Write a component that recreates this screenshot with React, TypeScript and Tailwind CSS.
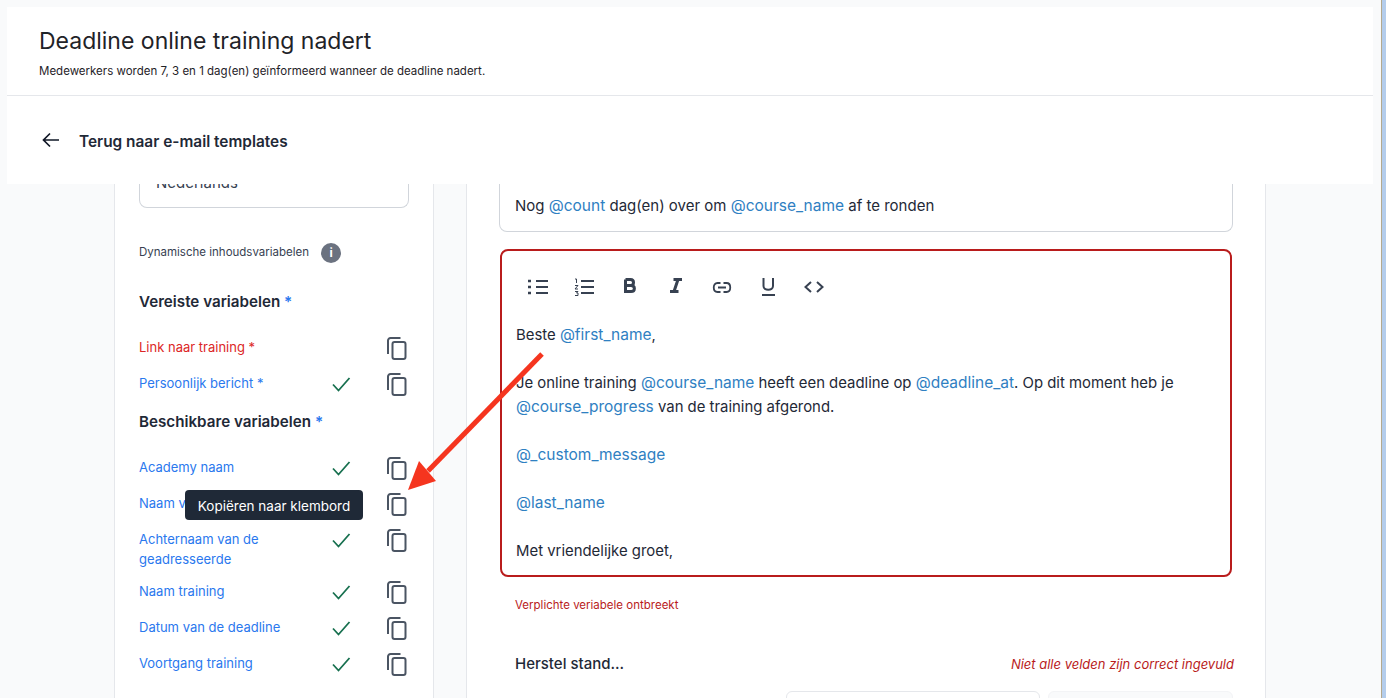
import { ReactNode } from "react";

function CopyIcon() {
  return (
    <svg width="24" height="24" viewBox="0 0 24 24" fill="none" stroke="#4b5563" strokeWidth="2" className="shrink-0">
      <path d="M15.5 2H5.5C4.2 2 3 3.2 3 4.5V18" />
      <rect x="7.5" y="6" width="13" height="17" rx="2" />
    </svg>
  );
}

function CheckIcon() {
  return (
    <svg width="20" height="20" viewBox="0 0 20 20" fill="none" stroke="#17704f" strokeWidth="1.8" className="shrink-0">
      <path d="M2 10.5L7.5 16.5L18.5 4" />
    </svg>
  );
}

function VarRow({ label, required, checked, tall, children }: { label: string; required?: boolean; checked?: boolean; tall?: boolean; children?: ReactNode }) {
  return (
    <div className={`flex items-start ${tall ? "h-[52px]" : "h-9"}`}>
      <div className={`w-[192px] text-[13px] leading-5 mt-[1px] ${required ? "text-[#dc2626]" : "text-[#2a78ee]"}`}>
        {children ?? label}
      </div>
      <div className="w-[28px] mt-[2px]">{checked && <CheckIcon />}</div>
      <div className="ml-[26px]">
        <CopyIcon />
      </div>
    </div>
  );
}

function Mention({ children }: { children: ReactNode }) {
  return <span className="text-[15.5px] text-[#2f80c2]">{children}</span>;
}

function App() {
  return (
    <div className="relative h-[698px] w-[1386px] overflow-hidden bg-[#f9fafb] font-['Inter',sans-serif] text-[#111827]">
      {/* browser edge */}
      <div className="absolute right-0 top-0 h-full w-[5px] bg-[#b4cdec] border-l border-[#b3a98f]" />

      <header className="relative z-10 ml-[7px] mt-[7px] w-[1366px] bg-white h-[177px]">
        <div className="h-[89px] border-b border-[#e5e7eb] pl-8 pt-[20px]">
          <h1 className="text-[23px] leading-7 font-normal text-[#1f2328]">Deadline online training nadert</h1>
          <p className="mt-[8px] text-[11.5px] leading-4 text-[#1f2328]">
            Medewerkers worden 7, 3 en 1 dag(en) geïnformeerd wanneer de deadline nadert.
          </p>
        </div>
        <div className="flex h-[88px] items-center pl-[35px]">
          <svg width="18" height="16" viewBox="0 0 18 16" fill="none" stroke="#111827" strokeWidth="1.7">
            <path d="M17 8H1.5M8 1.5L1.5 8L8 14.5" />
          </svg>
          <span className="ml-[19px] mt-[4px] text-[15.4px] font-semibold text-[#1f2937]">Terug naar e-mail templates</span>
        </div>
      </header>

      <main className="flex pl-[114px]">
        {/* left column */}
        <aside className="h-[514px] w-[320px] border-x border-[#e5e7eb] bg-white pl-6">
          <div className="flex h-6 w-[270px] items-start rounded-b-lg border border-t-0 border-[#d1d5db] pl-4">
            <span className="-mt-[11px] text-[15px] leading-5 text-[#374151]">Nederlands</span>
          </div>
          <div className="mt-[35px] flex h-5 items-center">
            <span className="text-[11.5px] text-[#374151]">Dynamische inhoudsvariabelen</span>
            <span className="ml-3 flex h-5 w-5 items-center justify-center rounded-full bg-[#6b7280] text-xs font-bold text-white">i</span>
          </div>
          <h3 className="mt-[29px] text-[15.2px] font-semibold leading-5 text-[#1f2937]">
            Vereiste variabelen <span className="text-[#2a78ee]">*</span>
          </h3>
          <div className="mt-[24px]">
            <VarRow label="Link naar training *" required />
            <VarRow label="Persoonlijk bericht *" checked />
          </div>
          <h3 className="mt-[4px] text-[15.2px] font-semibold leading-5 text-[#1f2937]">
            Beschikbare variabelen <span className="text-[#2a78ee]">*</span>
          </h3>
          <div className="mt-[24px]">
            <VarRow label="Academy naam" checked />
            <VarRow label="Naam van de geadresseerde" checked>
              <div className="h-5">Naam v</div>
            </VarRow>
            <VarRow label="Achternaam van de geadresseerde" checked tall />
            <VarRow label="Naam training" checked />
            <VarRow label="Datum van de deadline" checked />
            <VarRow label="Voortgang training" checked />
          </div>
        </aside>

        {/* right column */}
        <section className="ml-[32px] h-[514px] w-[800px] border-x border-[#e5e7eb] bg-white pl-8">
          <div className="flex h-12 w-[734px] items-start rounded-b-lg border border-t-0 border-[#d1d5db] pl-[15px] pt-[10px] text-[15px] leading-6 text-[#1f2937]">
            <span>
              Nog <Mention>@count</Mention> dag(en) over om <Mention>@course_name</Mention> af te ronden
            </span>
          </div>
          <div className="ml-[1px] mt-[17px] h-[328px] w-[732px] rounded-lg border-2 border-[#b91c1c] pl-[14px] pt-[24px] text-[14.9px] leading-6 text-[#374151]">
            <div className="flex h-6 items-center gap-[26px] pl-[12px]">
              <svg width="20" height="20" viewBox="0 0 20 20" fill="none" stroke="#374151" strokeWidth="2">
                <path d="M8 4H20M8 10H20M8 16H20" />
                <path d="M0 4H3M0 10H3M0 16H3" strokeWidth="2.4" />
              </svg>
              <svg width="20" height="20" viewBox="0 0 20 20" fill="none" stroke="#374151" strokeWidth="2">
                <path d="M7 4H20M7 10H20M7 16H20" />
                <path d="M1 2H2.5V6M1 8.5H4L1 12H4M1 14.5H4L2.5 16H4V18.5H1" strokeWidth="1" />
              </svg>
              <svg width="20" height="20" viewBox="0 0 20 20" fill="none" stroke="#374151" strokeWidth="3">
                <path d="M5.5 2.5H10.5C14.5 2.5 14.5 8.5 10.5 8.5H5.5M5.5 8.5H11C15.5 8.5 15.5 14.5 11 14.5H5.5ZM5.5 2.5V14.5" />
              </svg>
              <svg width="20" height="20" viewBox="0 0 20 20" fill="none" stroke="#374151" strokeWidth="3">
                <path d="M7.5 2.5H16M4 14.5H12.5M12 2.5L8 14.5" />
              </svg>
              <svg width="20" height="20" viewBox="0 0 20 20" fill="none" stroke="#374151" strokeWidth="1.8">
                <path d="M8.5 6H5.5C0.5 6 0.5 15 5.5 15H8.5M11.5 6H14.5C19.5 6 19.5 15 14.5 15H11.5M6 10.5H14" />
              </svg>
              <svg width="20" height="20" viewBox="0 0 20 20" fill="none" stroke="#374151" strokeWidth="2">
                <path d="M5.5 1V9C5.5 14 15 14 15 9V1M4 18H17" />
              </svg>
              <svg width="20" height="20" viewBox="0 0 20 20" fill="none" stroke="#374151" strokeWidth="2">
                <path d="M7 5L1.5 10L7 15M13 5L18.5 10L13 15" />
              </svg>
            </div>
            <div className="mt-[24px] text-[#1f2937]">
              <p>Beste <Mention>@first_name</Mention>,</p>
              <p className="mt-6">
                Je online training <Mention>@course_name</Mention> heeft een deadline op <Mention>@deadline_at</Mention>. Op dit moment heb je
                <br />
                <Mention>@course_progress</Mention> van de training afgerond.
              </p>
              <p className="mt-6"><Mention>@_custom_message</Mention></p>
              <p className="mt-6"><Mention>@last_name</Mention></p>
              <p className="mt-6">Met vriendelijke groet,</p>
            </div>
          </div>
          <p className="mt-[20px] pl-[16px] text-[11.5px] leading-4 text-[#b91c1c]">Verplichte veriabele ontbreekt</p>
          <div className="mt-[41px] flex w-[735px] items-center justify-between pl-[16px]">
            <span className="text-[15px] font-medium leading-5 text-[#1f2937]">Herstel stand...</span>
            <span className="text-[13px] italic leading-5 text-[#b91c1c]">Niet alle velden zijn correct ingevuld</span>
          </div>
          <div className="mt-[17px] flex w-[734px] justify-end gap-[8px]">
            <div className="h-10 w-[254px] rounded-md border border-[#e5e7eb] bg-white" />
            <div className="h-10 w-[185px] rounded-md border border-[#f3f4f6] bg-[#f9fafb]" />
          </div>
        </section>
      </main>

      {/* tooltip */}
      <div className="absolute left-[185px] top-[490px] z-20 flex h-[30px] w-[178px] items-center justify-center rounded bg-[#1f2937] pt-[2px] text-[13.5px] text-white">
        Kopiëren naar klembord
      </div>

      {/* annotation arrow */}
      <svg className="absolute left-[400px] top-[345px] z-20" width="150" height="150" viewBox="0 0 150 150">
        <path d="M142 9L28 126" stroke="#f5351f" strokeWidth="5" />
        <path d="M8 145L19 116L36 136Z" fill="#f5351f" />
      </svg>
    </div>
  );
}

export default App;
